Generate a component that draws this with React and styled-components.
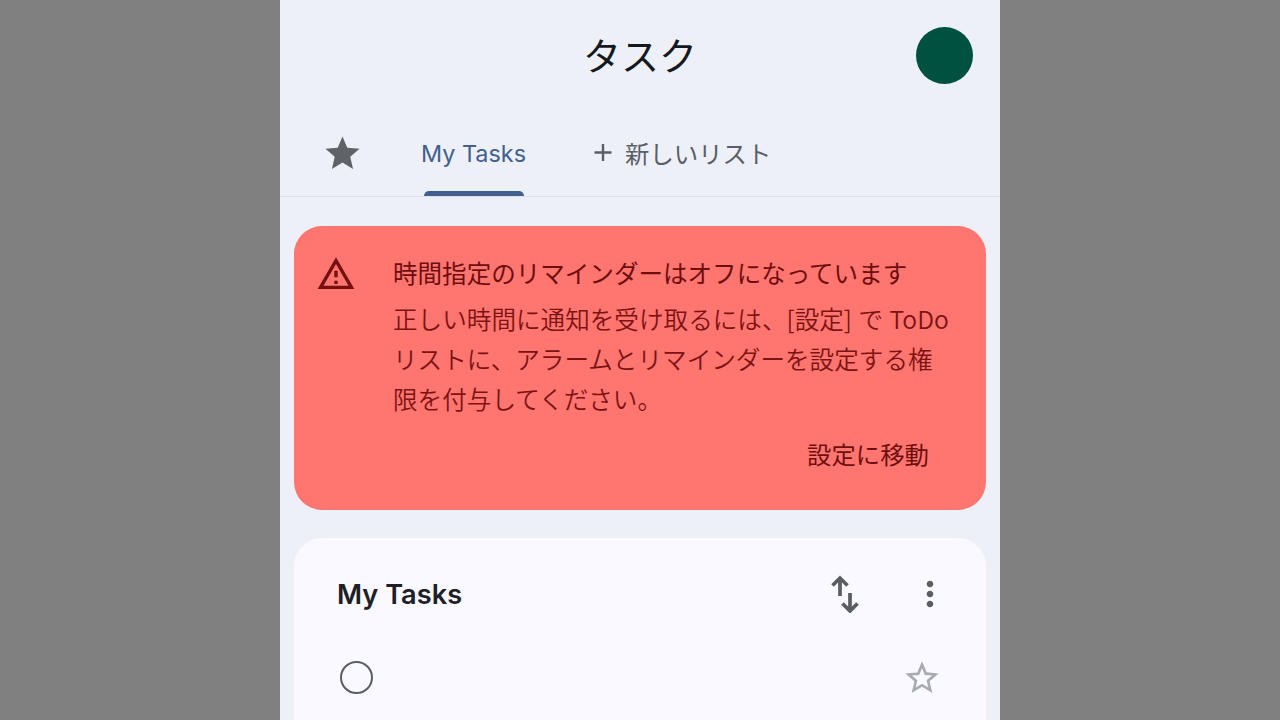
import React from "react";
import styled, { createGlobalStyle } from "styled-components";

const Global = createGlobalStyle`
  html, body {
    margin: 0;
    height: 100%;
    background: #808080;
    overflow: hidden;
  }
  #root {
    height: 100%;
  }
`;

const Stage = styled.div`
  display: flex;
  justify-content: center;
  height: 720px;
  font-family: Inter, "Noto Sans CJK JP", sans-serif;
`;

const Phone = styled.div`
  width: 720px;
  height: 720px;
  background: #eef0f8;
  overflow: hidden;
`;

const TopBar = styled.header`
  display: grid;
  grid-template-columns: 1fr auto 1fr;
  align-items: center;
  height: 110px;
  padding: 0 27px;
  box-sizing: border-box;
`;

const Title = styled.h1`
  grid-column: 2;
  margin: 0 0 3px;
  font-family: "Noto Sans CJK JP", sans-serif;
  font-size: 38px;
  font-weight: 400;
  color: #15181d;
`;

const Avatar = styled.div`
  grid-column: 3;
  justify-self: end;
  width: 57px;
  height: 57px;
  border-radius: 50%;
  background: #00523f;
`;

const TabRow = styled.nav`
  display: flex;
  height: 87px;
  box-sizing: border-box;
  padding-left: 42px;
  border-bottom: 1px solid #dfe1e9;
`;

const StarTab = styled.div`
  display: flex;
  align-items: center;
  height: 86px;
  color: #5f6368;
`;

const Tab = styled.div`
  display: flex;
  flex-direction: column;
  align-items: center;
  margin-left: 58px;
`;

const TabLabel = styled.span`
  display: flex;
  align-items: center;
  flex: 1;
  padding-top: 5px;
  font-size: 23.4px;
  color: #41608f;
`;

const Indicator = styled.i`
  display: block;
  width: 100px;
  height: 5px;
  border-radius: 5px 5px 0 0;
  background: #41608f;
`;

const AddTab = styled.div`
  display: flex;
  align-items: center;
  gap: 12px;
  height: 86px;
  margin-left: 67px;
  padding-bottom: 2px;
  box-sizing: border-box;
  font-family: "Noto Sans CJK JP", sans-serif;
  font-size: 24.4px;
  color: #5a5e66;
`;

const Content = styled.main`
  display: flex;
  flex-direction: column;
  gap: 28px;
  padding: 29px 14px 0;
`;

const Alert = styled.section`
  display: grid;
  grid-template-columns: 77px 1fr;
  height: 284px;
  box-sizing: border-box;
  padding: 27px 32px 0 22px;
  border-radius: 28px;
  background: #ff7570;
  color: #7c1313;
  font-family: "Noto Sans CJK JP", sans-serif;
`;

const AlertIcon = styled.div`
  padding-top: 1px;
  color: #741010;
`;

const AlertTitle = styled.div`
  font-size: 24.55px;
  line-height: 40px;
  font-weight: 400;
  color: #6e0e0e;
`;

const AlertBody = styled.p`
  margin: 5px 0 0;
  font-size: 24.6px;
  line-height: 40px;
  font-weight: 350;
  word-spacing: 1px;
`;

const AlertAction = styled.div`
  margin: 16px 25px 0 0;
  text-align: right;
  font-size: 24.4px;
  line-height: 40px;
  color: #6e0e0e;
`;

const Card = styled.section`
  height: 300px;
  padding: 30px 36px 0 43px;
  border-radius: 28px;
  background: #f9f9ff;
`;

const CardHeader = styled.div`
  display: flex;
  align-items: center;
  height: 52px;
`;

const CardTitle = styled.h2`
  flex: 1;
  margin: 0;
  font-family: Inter, sans-serif;
  font-size: 27.2px;
  font-weight: 600;
  color: #1e2026;
`;

const IconButton = styled.span`
  display: flex;
  margin-left: ${(p) => p.$gap || 0}px;
  color: #5a5d64;
`;

const TaskRow = styled.div`
  display: flex;
  align-items: center;
  justify-content: space-between;
  margin-top: 36px;
  padding-left: 3px;
`;

const Circle = styled.span`
  width: 33px;
  height: 33px;
  box-sizing: border-box;
  border: 2.5px solid #5a5d64;
  border-radius: 50%;
`;

const StarOutline = styled.span`
  display: flex;
  margin-right: 8px;
  padding-top: 2px;
  color: #a9abb2;
`;

function Icon({ d, size }) {
  return (
    <svg width={size} height={size} viewBox="0 0 24 24" fill="currentColor">
      <path d={d} />
    </svg>
  );
}

export default function App() {
  return (
    <Stage>
      <Global />
      <Phone>
        <TopBar>
          <Title>タスク</Title>
          <Avatar />
        </TopBar>
        <TabRow>
          <StarTab>
            <Icon
              size={41}
              d="M12 17.27L18.18 21l-1.64-7.03L22 9.24l-7.19-.61L12 2 9.19 8.63 2 9.24l5.46 4.73L5.82 21z"
            />
          </StarTab>
          <Tab>
            <TabLabel>My Tasks</TabLabel>
            <Indicator />
          </Tab>
          <AddTab>
            <svg width="20" height="20" viewBox="0 0 20 20" fill="none" stroke="currentColor" strokeWidth="2.4">
              <path d="M10 2v17M1.500 10.500h17" />
            </svg>
            新しいリスト
          </AddTab>
        </TabRow>
        <Content>
          <Alert>
            <AlertIcon>
              <Icon
                size={40}
                d="M12 5.99L19.53 19H4.47L12 5.99M12 2L1 21h22L12 2zm1 14h-2v2h2v-2zm0-6h-2v4h2v-4z"
              />
            </AlertIcon>
            <div>
              <AlertTitle>時間指定のリマインダーはオフになっています</AlertTitle>
              <AlertBody>
                正しい時間に通知を受け取るには、[設定] で ToDo リストに、アラームとリマインダーを設定する権限を付与してください。
              </AlertBody>
              <AlertAction>設定に移動</AlertAction>
            </div>
          </Alert>
          <Card>
            <CardHeader>
              <CardTitle>My Tasks</CardTitle>
              <IconButton>
                <svg width="30" height="38" viewBox="0 0 30 38" fill="none" stroke="currentColor" strokeWidth="3.7">
                  <path d="M10 21V3M2.500 10.500L10 3l7.500 7.500" />
                  <path d="M20 18v18M12.500 28.500L20 36l7.500-7.500" />
                </svg>
              </IconButton>
              <IconButton $gap={50}>
                <Icon
                  size={40}
                  d="M12 8c1.1 0 2-.9 2-2s-.9-2-2-2-2 .9-2 2 .9 2 2 2zm0 2c-1.1 0-2 .9-2 2s.9 2 2 2 2-.9 2-2-.9-2-2-2zm0 6c-1.1 0-2 .9-2 2s.9 2 2 2 2-.9 2-2-.9-2-2-2z"
                />
              </IconButton>
            </CardHeader>
            <TaskRow>
              <Circle />
              <StarOutline>
                <Icon
                  size={40}
                  d="M22 9.24l-7.19-.62L12 2 9.19 8.63 2 9.24l5.46 4.73L5.82 21 12 17.27 18.18 21l-1.63-7.03L22 9.24zM12 15.4l-3.76 2.27 1-4.28-3.32-2.88 4.38-.38L12 6.1l1.71 4.04 4.38.38-3.32 2.88 1 4.28L12 15.4z"
                />
              </StarOutline>
            </TaskRow>
          </Card>
        </Content>
      </Phone>
    </Stage>
  );
}
